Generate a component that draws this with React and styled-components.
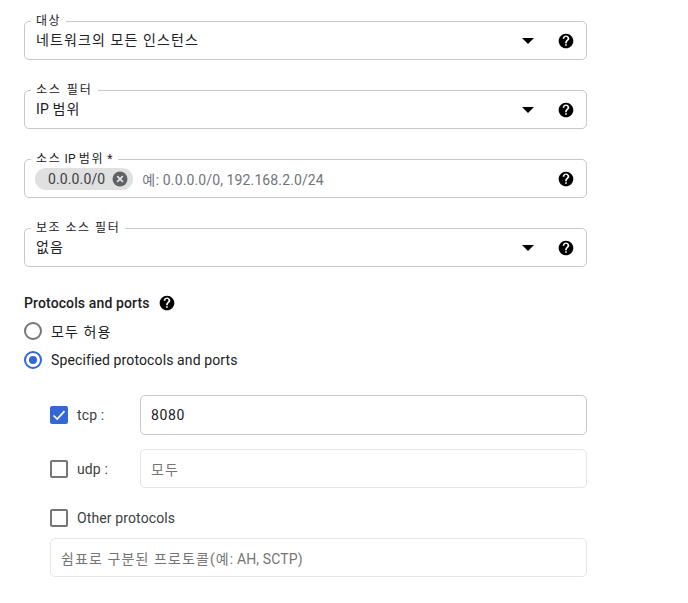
import React from "react";
import styled, { createGlobalStyle } from "styled-components";

const FONT = `Roboto, "Noto Sans CJK KR", sans-serif`;

const Global = createGlobalStyle`
  html, body { margin: 0; padding: 0; background: #fff; }
  body { font-family: ${FONT}; color: #202124; }
`;

const Page = styled.div`
  width: 563px;
  padding: 21px 0 0 24px;
  font-size: 14px;
  letter-spacing: 0.12px;
`;

// korean runs sit wider in the original font
const Ko = styled.span`
  letter-spacing: ${(p) => p.$gap || "1.1px"};
`;

const Field = styled.div`
  position: relative;
  height: 39px;
  box-sizing: border-box;
  border: 1px solid #c8c8c8;
  border-radius: 5px;
  margin-bottom: 30px;
  padding: 0 12px 0 11px;
  display: flex;
  align-items: center;
`;

const Legend = styled.label`
  position: absolute;
  left: 6px;
  top: -8px;
  padding: 0 5px;
  background: #fff;
  font-size: 12px;
  line-height: 14px;
  color: #202124;
`;

const Value = styled.span`
  flex: 1;
  line-height: 20px;
  position: relative;
  top: -1px;
`;

const Caret = styled.span`
  width: 0;
  height: 0;
  border-left: 6px solid transparent;
  border-right: 6px solid transparent;
  border-top: 6px solid #000;
  margin-right: 24px;
`;

const Chip = styled.span`
  display: inline-flex;
  align-items: center;
  height: 22px;
  border-radius: 11px;
  background: #e0e0e0;
  padding: 0 5px 0 13px;
  gap: 7px;
  color: #3c4043;
  margin: 0 9px 0 -1px;
`;

const Placeholder = styled.span`
  flex: 1;
  color: #70757a;
`;

const Heading = styled.div`
  display: flex;
  align-items: center;
  gap: 9px;
  height: 20px;
  margin-top: -4px;
  font-weight: 500;
  font-size: 14px;
  color: #202124;
`;

const RadioRow = styled.div`
  display: flex;
  align-items: center;
  gap: 9px;
  height: 20px;
  margin-top: 8px;
  & + & {
    margin-top: 9px;
  }
`;

const RadioMark = styled.span`
  width: 18px;
  height: 18px;
  box-sizing: border-box;
  border-radius: 50%;
  border: 2px solid ${(p) => (p.$on ? "#3367d6" : "#757575")};
  display: flex;
  align-items: center;
  justify-content: center;
  &::after {
    content: "";
    display: ${(p) => (p.$on ? "block" : "none")};
    width: 8px;
    height: 8px;
    border-radius: 50%;
    background: #3367d6;
  }
`;

const Protocols = styled.div`
  padding-left: 26px;
  margin-top: 25px;
`;

const PortRow = styled.div`
  display: flex;
  align-items: center;
  margin-bottom: ${(p) => p.$gap || "14px"};
`;

const OtherRow = styled.div`
  display: flex;
  align-items: center;
  height: 20px;
  margin-bottom: 10px;
`;

const Box = styled.span`
  width: 18px;
  height: 18px;
  box-sizing: border-box;
  border-radius: 2px;
  border: 2px solid ${(p) => (p.$on ? "#3367d6" : "#757575")};
  background: ${(p) => (p.$on ? "#3367d6" : "#fff")};
  display: flex;
  align-items: center;
  justify-content: center;
  margin-right: 9px;
`;

const PortLabel = styled.span`
  width: 63px;
  color: #3c4043;
`;

const OtherLabel = styled.span`
  color: #3c4043;
`;

const Input = styled.div`
  flex: 1;
  height: ${(p) => (p.$on ? "40px" : "39px")};
  box-sizing: border-box;
  border: 1px solid ${(p) => (p.$on ? "#c8c8c8" : "#e6e6e6")};
  border-radius: 5px;
  padding: 0 10px;
  display: flex;
  align-items: center;
  color: ${(p) => (p.$on ? "#202124" : "#757575")};
  letter-spacing: ${(p) => (p.$on ? "0.6px" : "0.12px")};
`;

const HelpIcon = ({ size = 16 }) => (
  <svg width={size} height={size} viewBox="0 0 24 24" style={{ flex: "none" }}>
    <path
      fill="#000"
      d="M12 1C5.9 1 1 5.9 1 12s4.9 11 11 11 11-4.9 11-11S18.1 1 12 1zm1.2 18.2h-2.5v-2.5h2.5v2.5zm2.5-8.2l-1.1 1.1c-.9.9-1.4 1.6-1.4 3.2h-2.5v-.6c0-1.3.5-2.4 1.4-3.3l1.5-1.6c.4-.4.7-1 .7-1.6 0-1.3-1.1-2.4-2.4-2.4S9.5 7.3 9.5 8.6H7c0-2.7 2.2-5 5-5s5 2.2 5 5c0 .9-.5 1.8-1.3 2.4z"
    />
  </svg>
);

const ClearIcon = () => (
  <svg width="16" height="16" viewBox="0 0 16 16">
    <circle cx="8" cy="8" r="7.5" fill="#5f6368" />
    <path d="M5.2 5.2l5.6 5.6M10.8 5.2l-5.6 5.6" stroke="#e0e0e0" strokeWidth="1.8" />
  </svg>
);

const CheckIcon = () => (
  <svg width="14" height="14" viewBox="0 0 14 14">
    <path d="M1.5 7.5l3.7 3.6 7.3-8" fill="none" stroke="#fff" strokeWidth="1.7" />
  </svg>
);

const SelectField = ({ label, value }) => (
  <Field>
    <Legend>{label}</Legend>
    <Value>{value}</Value>
    <Caret />
    <HelpIcon />
  </Field>
);

export default function App() {
  return (
    <Page>
      <Global />
      <SelectField label={<Ko $gap="1.4px">대상</Ko>} value={<Ko>네트워크의 모든 인스턴스</Ko>} />
      <SelectField label={<Ko $gap="1.9px">소스 필터</Ko>} value={<>IP <Ko>범위</Ko></>} />
      <Field>
        <Legend>
          <Ko $gap="1.7px">소스</Ko> IP <Ko $gap="1.7px">범위</Ko> *
        </Legend>
        <Chip>
          0.0.0.0/0
          <ClearIcon />
        </Chip>
        <Placeholder>
          <Ko $gap="0.6px">예</Ko>: 0.0.0.0/0, 192.168.2.0/24
        </Placeholder>
        <HelpIcon />
      </Field>
      <SelectField label={<Ko $gap="1.5px">보조 소스 필터</Ko>} value={<Ko>없음</Ko>} />

      <Heading>
        Protocols and ports
        <HelpIcon />
      </Heading>
      <RadioRow>
        <RadioMark />
        <Ko>모두 허용</Ko>
      </RadioRow>
      <RadioRow>
        <RadioMark $on />
        Specified protocols and ports
      </RadioRow>

      <Protocols>
        <PortRow>
          <Box $on>
            <CheckIcon />
          </Box>
          <PortLabel>tcp :</PortLabel>
          <Input $on>8080</Input>
        </PortRow>
        <PortRow $gap="20px">
          <Box />
          <PortLabel>udp :</PortLabel>
          <Input>
            <Ko>모두</Ko>
          </Input>
        </PortRow>
        <OtherRow>
          <Box />
          <OtherLabel>Other protocols</OtherLabel>
        </OtherRow>
        <Input>
          <span>
            <Ko>쉼표로 구분된 프로토콜(예</Ko>: AH, SCTP)
          </span>
        </Input>
      </Protocols>
    </Page>
  );
}
